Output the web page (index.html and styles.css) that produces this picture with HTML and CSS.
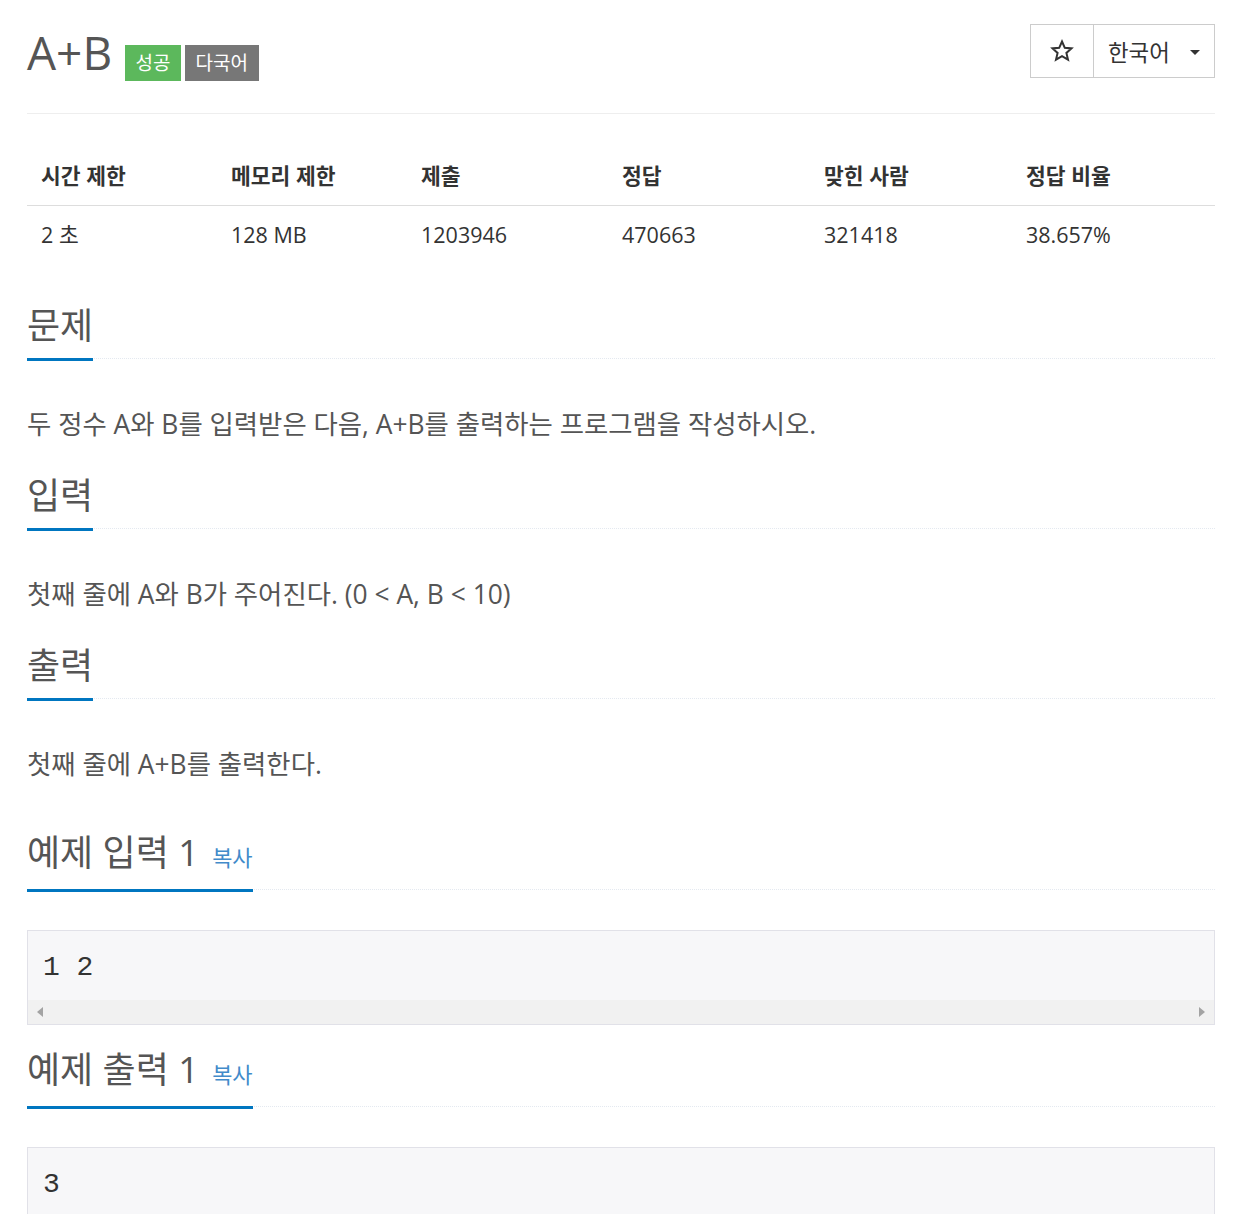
FILE: index.html
```html
<!DOCTYPE html>
<html lang="ko">
<head>
<meta charset="utf-8">
<title>A+B</title>
<link rel="stylesheet" href="styles.css">
</head>
<body>
<div class="container">
  <div class="page-header">
    <div class="title">
      <span class="title-text">A+B</span>
      <span class="label label-success">성공</span>
      <span class="label label-default">다국어</span>
    </div>
    <div class="btn-group">
      <div class="btn btn-star">
        <svg width="24" height="24" viewBox="0 0 24 24"><polygon points="12,2.5 14.8,8.8 21.5,9.4 16.4,13.9 18,20.6 12,17.1 6,20.6 7.6,13.9 2.5,9.4 9.2,8.8" fill="none" stroke="#333" stroke-width="2" stroke-linejoin="miter"/></svg>
      </div>
      <div class="btn btn-lang">
        <span>한국어</span>
        <span class="caret"></span>
      </div>
    </div>
  </div>

  <table class="info-table">
    <thead>
      <tr>
        <th class="c1">시간 제한</th>
        <th class="c2">메모리 제한</th>
        <th class="c3">제출</th>
        <th class="c4">정답</th>
        <th class="c5">맞힌 사람</th>
        <th class="c6">정답 비율</th>
      </tr>
    </thead>
    <tbody>
      <tr>
        <td>2 초</td>
        <td>128 MB</td>
        <td>1203946</td>
        <td>470663</td>
        <td>321418</td>
        <td>38.657%</td>
      </tr>
    </tbody>
  </table>

  <section class="section section-first">
    <div class="headline"><h2>문제</h2></div>
    <p class="problem-text">두 정수 A와 B를 입력받은 다음, A+B를 출력하는 프로그램을 작성하시오.</p>
  </section>

  <section class="section">
    <div class="headline"><h2>입력</h2></div>
    <p class="problem-text">첫째 줄에 A와 B가 주어진다. (0 &lt; A, B &lt; 10)</p>
  </section>

  <section class="section">
    <div class="headline"><h2>출력</h2></div>
    <p class="problem-text">첫째 줄에 A+B를 출력한다.</p>
  </section>

  <section class="section section-sample">
    <div class="headline"><h2>예제 입력 1 <a class="copy">복사</a></h2></div>
    <div class="sample-box">
      <pre class="sample-data">1 2</pre>
      <div class="scrollbar"><span class="arrow arrow-left"></span><span class="arrow arrow-right"></span></div>
    </div>
  </section>

  <section class="section section-sample2">
    <div class="headline"><h2>예제 출력 1 <a class="copy">복사</a></h2></div>
    <div class="sample-box">
      <pre class="sample-data">3</pre>
      <div class="scrollbar"><span class="arrow arrow-left"></span><span class="arrow arrow-right"></span></div>
    </div>
  </section>
</div>
</body>
</html>
```

FILE: styles.css
```css
html {
  overflow: hidden;
}
body {
  margin: 0;
  background: #fff;
  font-family: "Open Sans", "Noto Sans CJK KR", sans-serif;
  color: #333;
}
.container {
  width: 1188px;
  margin-left: 27px;
}
.page-header {
  display: flex;
  justify-content: space-between;
  align-items: flex-start;
  height: 113px;
  border-bottom: 1px solid #eee;
}
.title {
  display: flex;
  align-items: baseline;
  margin-top: 27px;
}
.title-text {
  font-size: 46px;
  line-height: 50px;
  color: #555;
  margin-right: 13px;
}
.label {
  font-size: 19px;
  line-height: 18px;
  padding: 9px 10.5px;
  color: #fff;
  margin-right: 4px;
}
.label-success { background: #5cb85c; }
.label-default { background: #777; }

.btn-group {
  display: flex;
  margin-top: 24px;
  border: 1px solid #ccc;
  height: 52px;
}
.btn {
  display: flex;
  align-items: center;
  color: #333;
}
.btn-star {
  width: 62px;
  justify-content: center;
  border-right: 1px solid #ccc;
}
.btn-lang {
  width: 120px;
  box-sizing: border-box;
  padding: 0 14px 0 14px;
  justify-content: space-between;
  font-size: 22.4px;
}
.caret {
  width: 0;
  height: 0;
  border-top: 5px solid #333;
  border-left: 5px solid transparent;
  border-right: 5px solid transparent;
  margin-top: 2px;
}

.info-table {
  width: 100%;
  border-collapse: collapse;
  margin-top: 34px;
  font-size: 21.5px;
  line-height: 30px;
  table-layout: fixed;
}
.info-table th,
.info-table td {
  box-sizing: border-box;
  padding: 13px 14px;
  color: #333;
  text-align: left;
}
.info-table th {
  font-weight: 700;
  padding-bottom: 14px;
  border-bottom: 1px solid #ddd;
}
.info-table td {
  padding-top: 14px;
}
.c1, .c2 { width: 190px; }
.c3 { width: 201px; }
.c4, .c5 { width: 202px; }

.section { margin-top: 31px; }
.section-first { margin-top: 40px; }
.section-sample { margin-top: 48px; }
.section-sample2 { margin-top: 22px; }

.headline {
  display: flex;
  border-bottom: 1px dotted #e4e9f0;
  margin-bottom: 47px;
}
.section-sample .headline,
.section-sample2 .headline {
  margin-bottom: 40px;
}
.headline h2 {
  margin: 0 0 -3px 0;
  font-size: 36px;
  line-height: 40px;
  font-weight: 400;
  color: #555;
  padding-top: 3px;
  padding-bottom: 12px;
  border-bottom: 3px solid #0076c0;
}
.copy {
  font-size: 22px;
  color: #428bca;
  margin-left: 4px;
}
.problem-text {
  margin: 0;
  font-size: 26.4px;
  line-height: 36px;
  color: #555;
}
.sample-box {
  border: 1px solid #e1e1e8;
  background: #f7f7f9;
}
.sample-data {
  margin: 0;
  padding: 19px 15px 15px;
  font-family: "Liberation Mono", monospace;
  font-size: 28px;
  line-height: 35px;
  color: #333;
}
.scrollbar {
  height: 24px;
  background: #f1f1f1;
  display: flex;
  justify-content: space-between;
  align-items: center;
  padding: 0 9px;
}
.arrow {
  width: 0;
  height: 0;
  border-top: 5px solid transparent;
  border-bottom: 5px solid transparent;
}
.arrow-left { border-right: 6px solid #a3a3a3; }
.arrow-right { border-left: 6px solid #a3a3a3; }
```
